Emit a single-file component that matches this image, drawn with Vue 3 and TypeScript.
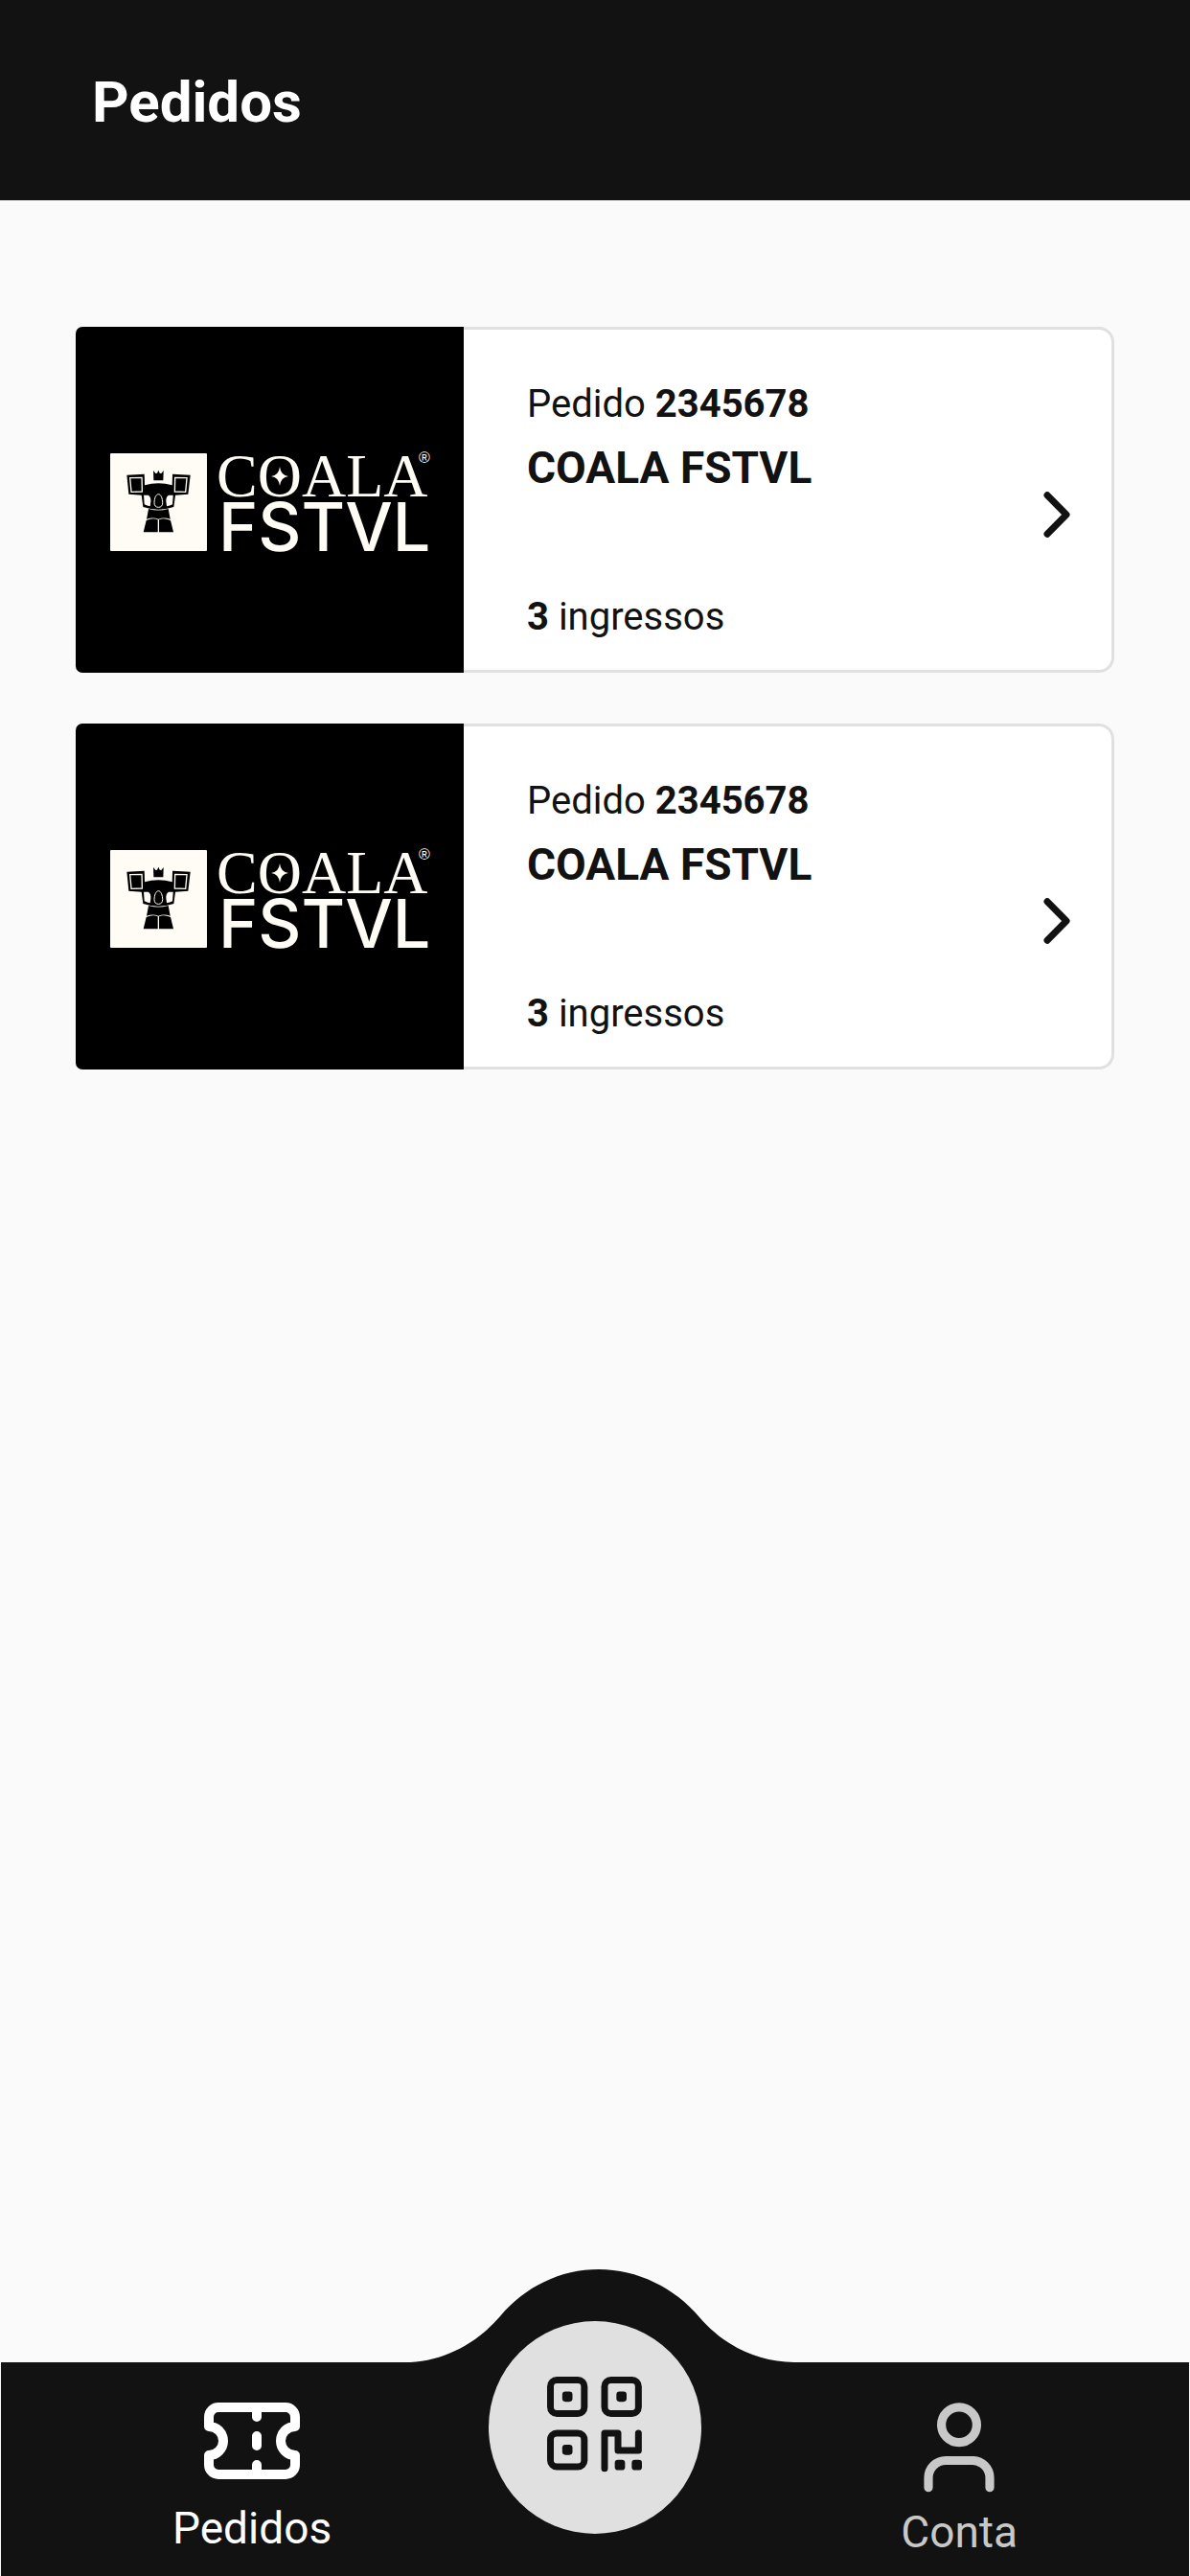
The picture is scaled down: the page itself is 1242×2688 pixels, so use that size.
<script setup lang="ts">
interface Order {
  id: number
  number: string
  event: string
  tickets: number
  low: boolean
}

const orders: Order[] = [
  { id: 1, number: '2345678', event: 'COALA FSTVL', tickets: 3, low: false },
  { id: 2, number: '2345678', event: 'COALA FSTVL', tickets: 3, low: true },
]
</script>

<template>
  <div class="page">
    <header class="topbar">
      <h1>Pedidos</h1>
    </header>

    <main class="orders">
      <a v-for="order in orders" :key="order.id" class="card" href="#">
        <div class="cover">
          <svg class="logo" viewBox="0 0 334 107" role="img" aria-label="Coala FSTVL">
            <rect x="0" y="5" width="101" height="102" rx="1" fill="#fffcf5" />
            <g transform="translate(-15.3 -8.3) scale(0.3333)">
              <path d="M181 94l7 9 5-1 4-9 4 9 5 1 7-9-1 31h-30z" />
              <path d="M98 108l55-3 1 35q43-13 86 0l1-35 56 3-7 60-40 3-5 37q-48 16-96 0l-5-37-40-3z" />
              <path d="M108 117l37-1 1 44-34 1zM286 117l-37-1-1 44 34 1z" fill="none" stroke="#fffcf5" stroke-width="4" />
              <path d="M151 171h14q9 5 8 20l-2 15q-10-1-18-6zM243 171h-14q-9 5-8 20l2 15q10-1 18-6z" fill="#fffcf5" />
              <path d="M197 168c-8 0-13 14-13 27 0 9 5 14 13 14s13-5 13-14c0-13-5-27-13-27z" stroke="#fffcf5" stroke-width="3" />
              <path d="M166 214q31 9 62 0l6 32q-20-7-37 0-17-7-37 0z" />
              <path d="M159 250q20-9 36-2v39h-45zM235 250q-20-9-36-2v39h45z" />
            </g>
            <g fill="#fffcf5">
              <text class="serif" x="111" y="50">COALA</text>
              <path d="M177 19q1 9 9 10-8 1-9 10-1-9-9-10 8-1 9-10z" />
              <text class="mark" x="322" y="15">®</text>
              <text class="sans" x="113" y="107">FSTVL</text>
            </g>
          </svg>
        </div>
        <div class="details">
          <p>Pedido <strong>{{ order.number }}</strong></p>
          <h2>{{ order.event }}</h2>
          <p class="count"><strong>{{ order.tickets }}</strong> ingressos</p>
        </div>
        <div class="arrow" :class="{ low: order.low }">
          <svg width="28" height="48" viewBox="0 0 28 48" aria-hidden="true">
            <path d="M4 3.7L24 24 4 44.3" fill="none" stroke="#121212" stroke-width="7" stroke-linecap="round" stroke-linejoin="round" />
          </svg>
        </div>
      </a>
    </main>

    <nav class="tabs">
      <svg class="hump" width="420" height="99" viewBox="0 0 420 99" aria-hidden="true">
        <path d="M11 97C50 97 86 78 111 49 137 18 174 0 214 0S293 19 319 50C344 79 379 97 418 97V99H11z" fill="#121212" />
      </svg>
      <a class="tab active" href="#">
        <svg width="120" height="120" viewBox="-10 -20 120 120" aria-hidden="true">
          <g fill="none" stroke="currentColor" stroke-width="10" stroke-linecap="round" stroke-linejoin="round">
            <path d="M5 25V15A10 10 0 0 1 15 5H85A10 10 0 0 1 95 15V25A15 15 0 0 0 95 55V65A10 10 0 0 1 85 75H15A10 10 0 0 1 5 65V55A15 15 0 0 0 5 25z" />
            <path d="M55 5V15M55 35V45M55 65V75" />
          </g>
        </svg>
        <span>Pedidos</span>
      </a>
      <button class="scan" type="button" aria-label="Ler QR code">
        <svg width="100" height="106" viewBox="0 0 300 318" aria-hidden="true">
          <g fill="none" stroke="#121212" stroke-width="21" stroke-linecap="round" stroke-linejoin="round">
            <rect x="10.5" y="10.5" width="106" height="105" rx="20" />
            <rect x="180" y="10.5" width="106" height="105" rx="20" />
            <rect x="10.5" y="177" width="106" height="105" rx="20" />
            <path d="M180 287V177H222V231H286V177" />
          </g>
          <g fill="#121212">
            <rect x="47.5" y="46.5" width="32" height="32" rx="10" />
            <rect x="217" y="46.5" width="32" height="32" rx="10" />
            <rect x="47.5" y="213" width="32" height="32" rx="10" />
            <rect x="212" y="260.5" width="32" height="32" rx="10" />
            <rect x="265" y="260.5" width="32" height="32" rx="10" />
          </g>
        </svg>
      </button>
      <a class="tab" href="#">
        <svg width="74" height="124" viewBox="0 -20 74 124" aria-hidden="true">
          <g fill="none" stroke="currentColor" stroke-width="9.2" stroke-linecap="round">
            <circle cx="37" cy="23.3" r="18.4" />
            <path d="M5 88.7V78.5A18 18 0 0 1 23 60.5H51A18 18 0 0 1 69 78.5V88.7" />
          </g>
        </svg>
        <span>Conta</span>
      </a>
    </nav>
  </div>
</template>

<style>
body {
  margin: 0;
  background: #fafafa;
}
</style>

<style scoped>
.page {
  display: flex;
  flex-direction: column;
  min-height: 100vh;
  background: #fafafa;
  color: #121212;
  font-family: Roboto, "Liberation Sans", sans-serif;
}

.topbar {
  padding: 72px 96px 67px;
  background: #121212;
}

h1 {
  margin: 0;
  color: #fff;
  font-size: 60px;
  line-height: 70px;
  font-weight: 700;
}

.orders {
  flex: 1;
  display: flex;
  flex-direction: column;
  gap: 53px;
  padding: 132px 79px;
}

.card {
  display: flex;
  min-height: 361px;
  box-sizing: border-box;
  border: 3px solid #e0e0e0;
  border-radius: 16px;
  background: #fff;
  color: inherit;
  text-decoration: none;
}

.cover {
  display: flex;
  align-items: center;
  justify-content: center;
  flex: none;
  width: 405px;
  margin: -3px 0 -3px -3px;
  border-radius: 7px 0 0 7px;
  background: #000;
}

.logo {
  width: 334px;
  height: 107px;
  overflow: visible;
}

.serif {
  font-family: "Liberation Serif", serif;
  font-size: 64px;
}

.sans {
  font-family: Inter, "Liberation Sans", sans-serif;
  font-size: 70px;
  font-weight: 500;
}

.mark {
  font-family: "Liberation Sans", sans-serif;
  font-size: 16px;
}

.details {
  flex: 1;
  display: flex;
  flex-direction: column;
  padding: 54px 0 31px 66px;
}

.details p {
  margin: 0;
  font-size: 40px;
  line-height: 48px;
}

h2 {
  margin: 14px 0 0;
  font-size: 46px;
  line-height: 56px;
  font-weight: 700;
}

.details .count {
  margin-top: auto;
}

.arrow {
  display: flex;
  align-items: center;
  padding: 30px 43px 0 0;
}

.arrow.low {
  padding-top: 50px;
}

.tabs {
  position: relative;
  display: flex;
  justify-content: space-between;
  align-items: flex-start;
  margin: 0 1px;
  padding: 22px 179px 19px;
  background: #121212;
}

.hump {
  position: absolute;
  left: 50%;
  bottom: 100%;
  margin-bottom: -2px;
  transform: translateX(-50%);
}

.tab {
  display: flex;
  flex-direction: column;
  align-items: center;
  gap: 4px;
  color: #c8c8c8;
  font-size: 46px;
  line-height: 54px;
  text-decoration: none;
}

.tab.active {
  color: #fff;
}

.scan {
  position: absolute;
  top: -43px;
  left: 50%;
  display: flex;
  align-items: center;
  justify-content: center;
  width: 222px;
  height: 222px;
  padding: 0;
  border: 0;
  border-radius: 50%;
  background: #e0e0e0;
  transform: translateX(-50%);
}
</style>
